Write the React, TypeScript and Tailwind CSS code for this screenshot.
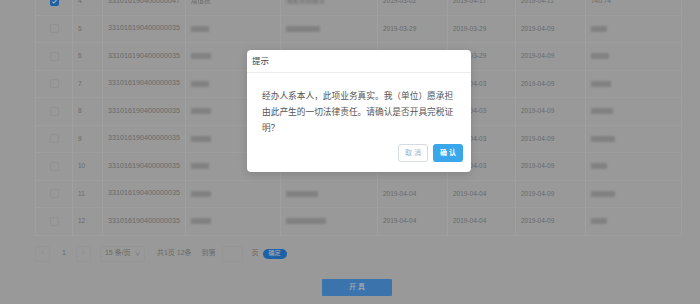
import React from 'react';

type Row = {
  no: number;
  id: string;
  checked?: boolean;
  name: string | null;
  org: string | null;
  d1: string;
  d2: string;
  d3: string;
  amount: string | null;
  blurW: [number, number, number];
};

const rows: Row[] = [
  { no: 4, id: '331016190400000047', checked: true, name: '增值税', org: '储蓄系统服务', d1: '2019-03-02', d2: '2019-04-17', d3: '2019-04-11', amount: '740.74', blurW: [20, 34, 20] },
  { no: 5, id: '331016190400000035', name: null, org: null, d1: '2019-03-29', d2: '2019-03-29', d3: '2019-04-09', amount: null, blurW: [18, 34, 16] },
  { no: 6, id: '331016190400000035', name: null, org: null, d1: '2019-03-29', d2: '2019-03-29', d3: '2019-04-09', amount: null, blurW: [20, 30, 18] },
  { no: 7, id: '331016190400000035', name: null, org: null, d1: '2019-04-03', d2: '2019-04-03', d3: '2019-04-09', amount: null, blurW: [18, 30, 20] },
  { no: 8, id: '331016190400000035', name: null, org: null, d1: '2019-04-03', d2: '2019-04-03', d3: '2019-04-09', amount: null, blurW: [20, 30, 22] },
  { no: 9, id: '331016190400000035', name: null, org: null, d1: '2019-04-03', d2: '2019-04-03', d3: '2019-04-09', amount: null, blurW: [20, 30, 24] },
  { no: 10, id: '331016190400000035', name: null, org: null, d1: '2019-04-03', d2: '2019-04-03', d3: '2019-04-09', amount: null, blurW: [18, 30, 16] },
  { no: 11, id: '331016190400000035', name: null, org: null, d1: '2019-04-04', d2: '2019-04-04', d3: '2019-04-09', amount: null, blurW: [20, 32, 24] },
  { no: 12, id: '331016190400000035', name: null, org: null, d1: '2019-04-04', d2: '2019-04-04', d3: '2019-04-09', amount: null, blurW: [20, 40, 16] },
];

// redacted cell content in the source screenshot
function Redacted({ w }: { w: number }) {
  return <div className="h-[6px] rounded-[1px] bg-[#b9b9b9] blur-[1px]" style={{ width: w }} />;
}

function Cell({ children, className = '' }: { children?: React.ReactNode; className?: string }) {
  return (
    <div className={`flex items-center border-r border-[#e6e6e6] pl-[5px] last:border-r-0 ${className}`}>
      {children}
    </div>
  );
}

export default function App() {
  return (
    <div className="relative h-[304px] w-[700px] overflow-hidden bg-[#dbdbdb] font-['Liberation_Sans','Noto_Sans_CJK_SC',sans-serif] text-[#999]">
      {/* table */}
      <div className="-mt-[12px] ml-[35px] w-[647px] border-x border-[#e4e4e4] text-[6.5px]">
        {rows.map((r) => (
          <div
            key={r.no}
            className="grid h-[27.5px] grid-cols-[37px_30px_83px_95px_97px_70px_68px_70px_95px] border-b border-[#e2e2e2]"
          >
            <div className="flex items-center justify-center border-r border-[#e6e6e6]">
              {r.checked ? (
                <div className="flex h-[9px] w-[9px] items-center justify-center rounded-[2px] bg-[#2d8cf0]">
                  <svg viewBox="0 0 10 10" className="h-[7px] w-[7px]">
                    <path d="M2 5.2l2 2 4-4.4" stroke="#fff" strokeWidth="1.6" fill="none" />
                  </svg>
                </div>
              ) : (
                <div className="h-[9px] w-[9px] rounded-[2px] border border-[#d0d0d0] bg-[#dbdbdb]" />
              )}
            </div>
            <Cell>{r.no}</Cell>
            <Cell className="text-[7.2px]">{r.id}</Cell>
            <Cell>{r.name ? <span className="blur-[0.6px]">{r.name}</span> : <Redacted w={r.blurW[0]} />}</Cell>
            <Cell>{r.org ? <span className="blur-[0.8px]">{r.org}</span> : <Redacted w={r.blurW[1]} />}</Cell>
            <Cell>{r.d1}</Cell>
            <Cell>{r.d2}</Cell>
            <Cell>{r.d3}</Cell>
            <Cell>{r.amount ?? <Redacted w={r.blurW[2]} />}</Cell>
          </div>
        ))}
      </div>

      {/* pagination */}
      <div className="ml-[35px] mt-[10px] flex h-[16px] items-center text-[7px] text-[#999]">
        <div className="flex h-[16px] w-[15px] items-center justify-center rounded-[2px] border border-[#d6d6d6] text-[#c4c4c4]">‹</div>
        <span className="ml-[12px]">1</span>
        <div className="ml-[10px] flex h-[16px] w-[15px] items-center justify-center rounded-[2px] border border-[#d6d6d6] text-[#c4c4c4]">›</div>
        <div className="ml-[9px] flex h-[16px] w-[45px] items-center justify-between rounded-[2px] border border-[#d6d6d6] px-[4px]">
          <span>15 条/页</span>
          <span className="text-[5px]">∨</span>
        </div>
        <span className="ml-[12px]">共1页 12条</span>
        <span className="ml-[10px]">到第</span>
        <div className="ml-[6px] h-[16px] w-[21px] rounded-[2px] border border-[#d6d6d6]" />
        <span className="ml-[9px]">页</span>
        <div className="ml-[4px] flex h-[10px] w-[24px] items-center justify-center rounded-full bg-[#2d8cf0] text-[6px] text-white">确定</div>
      </div>

      {/* submit */}
      <div className="ml-[14px] mt-[17px] flex justify-center">
        <div className="flex h-[17px] w-[70px] items-center justify-center rounded-[1px] bg-[#55a6f8] text-[7px] text-white">开 具</div>
      </div>

      {/* overlay */}
      <div className="absolute inset-0 bg-black/30" />

      {/* dialog */}
      <div className="absolute left-[247px] top-[50px] h-[122px] w-[224px] rounded-[4px] bg-white shadow-[0_2px_8px_rgba(0,0,0,0.15)]">
        <div className="flex h-[23px] items-center border-b border-[#ececec] pl-[5px] text-[8.5px] text-[#444]">提示</div>
        <div className="px-[15px] pt-[15px] text-[8.7px] leading-[16px] text-[#555]">
          经办人系本人，此项业务真实。我（单位）愿承担由此产生的一切法律责任。请确认是否开具完税证明？
        </div>
        <div className="absolute bottom-[10px] right-[8px] flex gap-[5px]">
          <div className="flex h-[18px] w-[30px] items-center justify-center rounded-[3px] border border-[#d4dbe2] text-[7px] text-[#8fb3d0]">取 消</div>
          <div className="flex h-[18px] w-[30px] items-center justify-center rounded-[3px] bg-[#3aa7ec] text-[7px] font-bold text-white">确 认</div>
        </div>
      </div>
    </div>
  );
}
